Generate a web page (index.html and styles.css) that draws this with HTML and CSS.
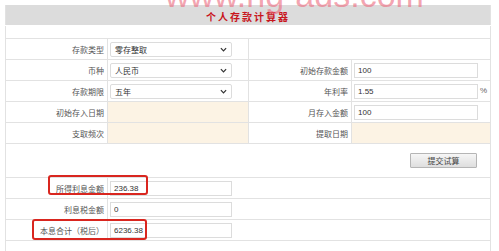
FILE: index.html
```html
<!DOCTYPE html>
<html lang="zh-CN">
<head>
  <meta charset="UTF-8" />
  <title>个人存款计算器</title>
  <link rel="stylesheet" href="styles.css">
</head>
<body>
  <div class="wrap">
    <div class="watermark">www.ng-ads.com</div>
    <table class="calc">
      <colgroup>
        <col class="c-label">
        <col class="c-value">
        <col class="c-label2">
        <col class="c-value2">
      </colgroup>
      <tr class="head">
        <td colspan="4"><span class="title">个人存款计算器</span></td>
      </tr>
      <tr class="spacer"><td colspan="4"></td></tr>
      <tr>
        <td class="label">存款类型</td>
        <td class="value"><div class="select">零存整取<svg viewBox="0 0 8 5" width="7" height="5"><path d="M1 1l3 3 3-3" fill="none" stroke="#333" stroke-width="1.4"/></svg></div></td>
        <td colspan="2" class="blank"></td>
      </tr>
      <tr>
        <td class="label">币种</td>
        <td class="value"><div class="select">人民币<svg viewBox="0 0 8 5" width="7" height="5"><path d="M1 1l3 3 3-3" fill="none" stroke="#333" stroke-width="1.4"/></svg></div></td>
        <td class="label">初始存款金额</td>
        <td class="value"><input class="box wide" value="100"></td>
      </tr>
      <tr>
        <td class="label">存款期限</td>
        <td class="value"><div class="select">五年<svg viewBox="0 0 8 5" width="7" height="5"><path d="M1 1l3 3 3-3" fill="none" stroke="#333" stroke-width="1.4"/></svg></div></td>
        <td class="label">年利率</td>
        <td class="value"><input class="box wide" value="1.55"><span class="unit">%</span></td>
      </tr>
      <tr>
        <td class="label">初始存入日期</td>
        <td class="value fill"></td>
        <td class="label">月存入金额</td>
        <td class="value"><input class="box wide" value="100"></td>
      </tr>
      <tr>
        <td class="label">支取频次</td>
        <td class="value fill"></td>
        <td class="label">提取日期</td>
        <td class="value fill"></td>
      </tr>
      <tr class="actions">
        <td colspan="4"><button class="submit">提交试算</button></td>
      </tr>
      <tr>
        <td class="label">所得利息金额</td>
        <td colspan="3" class="value"><input class="box" value="236.38"></td>
      </tr>
      <tr>
        <td class="label">利息税金额</td>
        <td colspan="3" class="value"><input class="box" value="0"></td>
      </tr>
      <tr>
        <td class="label">本息合计（税后）</td>
        <td colspan="3" class="value"><input class="box" value="6236.38"></td>
      </tr>
      <tr class="tail"><td colspan="4"></td></tr>
    </table>
    <div class="mark mark-interest"></div>
    <div class="mark mark-total"></div>
  </div>
</body>
</html>
```

FILE: styles.css
```css
body {
  margin: 0;
  padding: 5px 0 0 5px;
  background: #fff;
  font-family: "Noto Sans CJK SC", "Noto Sans", sans-serif;
  font-size: 8px;
  color: #555;
  overflow: hidden;
}

.wrap {
  position: relative;
  width: 485px;
}

.watermark {
  position: absolute;
  left: 160px;
  top: -29px;
  font-family: "Liberation Sans", Arial, sans-serif;
  font-size: 34px;
  color: rgba(236, 105, 125, 0.6);
  white-space: nowrap;
  pointer-events: none;
}

.calc {
  width: 485px;
  border-collapse: collapse;
  table-layout: fixed;
  border-left: 1px solid #e2e2e2;
  border-right: 1px solid #e2e2e2;
}

.c-label { width: 102px; }
.c-value { width: 141px; }
.c-label2 { width: 103px; }
.c-value2 { width: 139px; }

.calc td {
  padding: 0;
  height: 20px;
  border-bottom: 1px solid #e2e2e2;
  vertical-align: middle;
}

.head td {
  height: 20px;
  background: #dcdcdc;
  text-align: center;
  border-bottom: 1px solid #fff;
}

.title {
  display: inline-block;
  padding-top: 3px;
  color: #c8161d;
  font-weight: bold;
  font-size: 10px;
  letter-spacing: 2px;
}

.spacer td {
  height: 12px;
  border-top: 1px solid #e8e8e8;
}

.label {
  text-align: right;
  padding-right: 3px !important;
  border-right: 1px solid #e2e2e2;
  white-space: nowrap;
}

.value {
  padding-left: 2px !important;
  border-right: 1px solid #e2e2e2;
  color: #333;
}

.fill {
  background: #fcf3e4;
}

.select {
  display: flex;
  align-items: center;
  justify-content: space-between;
  box-sizing: border-box;
  width: 122px;
  height: 15px;
  padding: 0 4px 0 4px;
  border: 1px solid #dcdcdc;
  border-radius: 2px;
  background: #fff;
}

.box {
  box-sizing: border-box;
  width: 122px;
  height: 15px;
  padding: 0 3px;
  border: 1px solid #dcdcdc;
  background: #fff;
  font-family: "Liberation Sans", Arial, sans-serif;
  font-size: 8px;
  color: #333;
  vertical-align: middle;
}

.box.wide {
  width: 124px;
}

.unit {
  margin-left: 2px;
  font-family: "Liberation Sans", Arial, sans-serif;
  color: #666;
}

.actions td {
  height: 33px;
  text-align: right;
  padding-right: 13px;
}

.submit {
  width: 67px;
  height: 15px;
  margin-top: 0;
  padding: 0;
  border: 1px solid #b5b5b5;
  border-radius: 1px;
  background: linear-gradient(#f6f6f6, #dedede);
  font-family: "Noto Sans CJK SC", sans-serif;
  font-size: 8px;
  color: #444;
}

.tail td {
  height: 12px;
  border-bottom: none;
}

.mark {
  position: absolute;
  border: 2px solid #d9261f;
  border-radius: 3px;
  pointer-events: none;
}

.mark-interest {
  left: 43px;
  top: 170px;
  width: 96px;
  height: 16px;
}

.mark-total {
  left: 27px;
  top: 214px;
  width: 111px;
  height: 17px;
}
```
